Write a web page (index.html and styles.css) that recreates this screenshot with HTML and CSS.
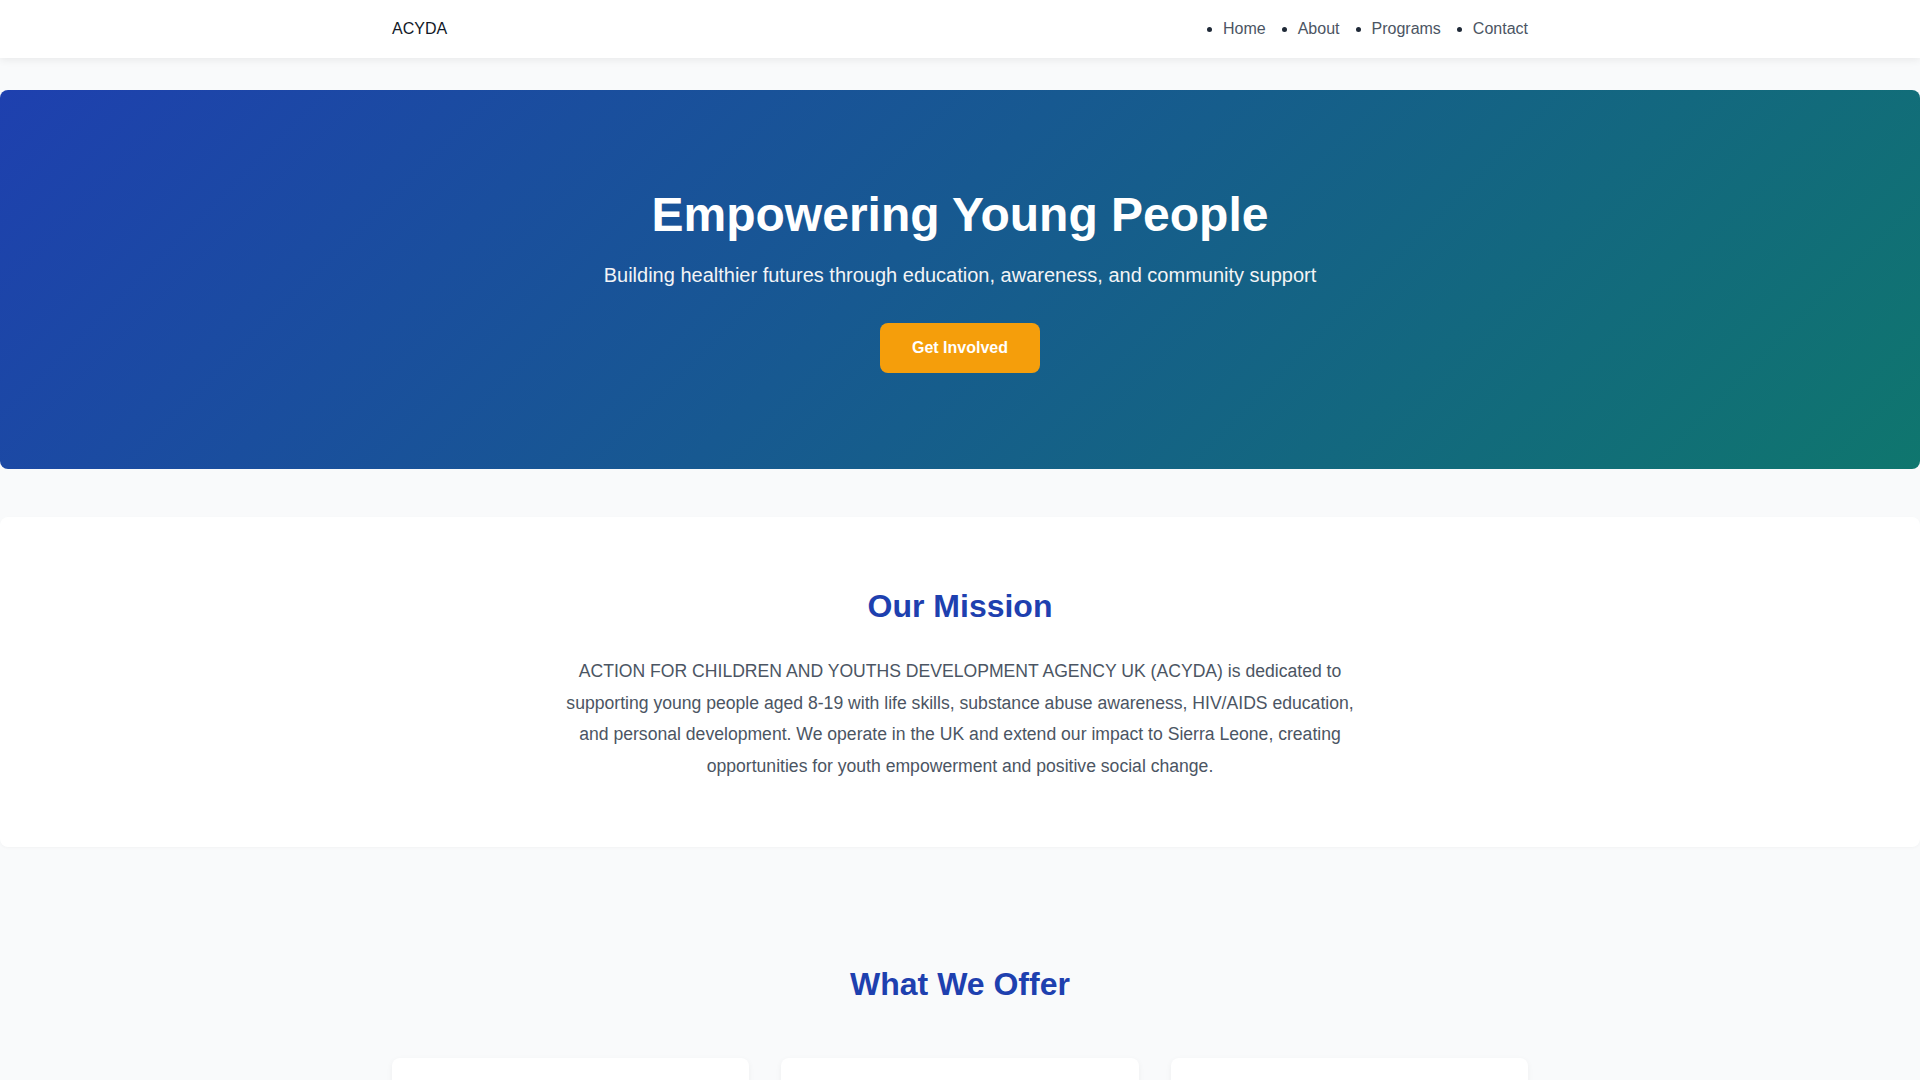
FILE: index.html
```html
<!DOCTYPE html>
<html lang="en">
<head>
<meta charset="utf-8">
<title>ACYDA - Empowering Young People</title>
<link rel="stylesheet" href="styles.css">
</head>
<body>
<header class="site-header">
  <div class="container nav-bar">
    <div class="logo">ACYDA</div>
    <ul class="nav-links">
      <li><a href="#">Home</a></li>
      <li><a href="#">About</a></li>
      <li><a href="#">Programs</a></li>
      <li><a href="#">Contact</a></li>
    </ul>
  </div>
</header>
<main class="main">
  <section class="hero">
    <h1 class="hero-title">Empowering Young People</h1>
    <p class="hero-subtitle">Building healthier futures through education, awareness, and community support</p>
    <a class="btn" href="#">Get Involved</a>
  </section>

  <section class="mission">
    <h2 class="section-title">Our Mission</h2>
    <p class="mission-text">ACTION FOR CHILDREN AND YOUTHS DEVELOPMENT AGENCY UK (ACYDA) is dedicated to supporting young people aged 8-19 with life skills, substance abuse awareness, HIV/AIDS education, and personal development. We operate in the UK and extend our impact to Sierra Leone, creating opportunities for youth empowerment and positive social change.</p>
  </section>

  <section class="offer">
    <h2 class="section-title offer-title">What We Offer</h2>
    <div class="container card-grid">
      <div class="card">
        <h3 class="card-title">Life Skills</h3>
        <p class="card-text">Practical workshops that build confidence, resilience and independence.</p>
      </div>
      <div class="card">
        <h3 class="card-title">Health Education</h3>
        <p class="card-text">Substance abuse awareness and HIV/AIDS education for young people.</p>
      </div>
      <div class="card">
        <h3 class="card-title">Personal Development</h3>
        <p class="card-text">Mentoring and support to help every young person reach their potential.</p>
      </div>
    </div>
  </section>
</main>
</body>
</html>
```

FILE: styles.css
```css
* {
  box-sizing: border-box;
}

html, body {
  margin: 0;
  padding: 0;
}

body {
  font-family: "Liberation Sans", Arial, Helvetica, sans-serif;
  font-size: 16px;
  line-height: 1.6;
  color: #1f2937;
  background: #f9fafb;
}

.container {
  max-width: 1200px;
  margin: 0 auto;
  padding: 0 32px;
}

.site-header {
  background: #ffffff;
  box-shadow: 0 2px 8px rgba(0, 0, 0, 0.07);
}

.nav-bar {
  display: flex;
  justify-content: space-between;
  align-items: center;
  padding-top: 16px;
  padding-bottom: 16px;
}

.logo {
  font-size: 16px;
  color: #111827;
}

.nav-links {
  display: flex;
  gap: 32px;
  margin: 0;
  padding: 0;
  list-style: disc;
}

.nav-links a {
  color: #4b5563;
  text-decoration: none;
}

.main {
  padding-top: 32px;
}

.hero {
  background: linear-gradient(135deg, #1e40af 0%, #0f766e 100%);
  color: #ffffff;
  text-align: center;
  padding: 96px 32px;
  border-radius: 8px;
}

.hero-title {
  margin: 0 0 16px;
  font-size: 48px;
  line-height: 1.2;
  font-weight: 700;
}

.hero-subtitle {
  margin: 0 0 32px;
  font-size: 20px;
  color: #f3f4f6;
}

.btn {
  display: inline-block;
  background: #f59e0b;
  color: #ffffff;
  font-weight: 700;
  text-decoration: none;
  padding: 12px 32px;
  border-radius: 8px;
}

.mission {
  margin-top: 48px;
  background: #ffffff;
  border-radius: 8px;
  padding: 64px 32px;
  text-align: center;
  box-shadow: 0 1px 3px rgba(0, 0, 0, 0.03);
}

.section-title {
  margin: 0 0 24px;
  font-size: 32px;
  font-weight: 700;
  color: #1e40af;
  text-align: center;
}

.mission-text {
  max-width: 800px;
  margin: 0 auto;
  font-size: 17.6px;
  line-height: 1.8;
  color: #4b5563;
}

.offer {
  margin-top: 48px;
  padding: 64px 0;
}

.offer-title {
  margin-bottom: 48px;
}

.card-grid {
  display: grid;
  grid-template-columns: repeat(3, 1fr);
  gap: 32px;
}

.card {
  background: #ffffff;
  border-radius: 8px;
  padding: 32px;
  box-shadow: 0 2px 6px rgba(0, 0, 0, 0.05);
}

.card-title {
  margin: 0 0 12px;
  font-size: 20px;
  color: #1e40af;
}

.card-text {
  margin: 0;
  color: #4b5563;
}
```
